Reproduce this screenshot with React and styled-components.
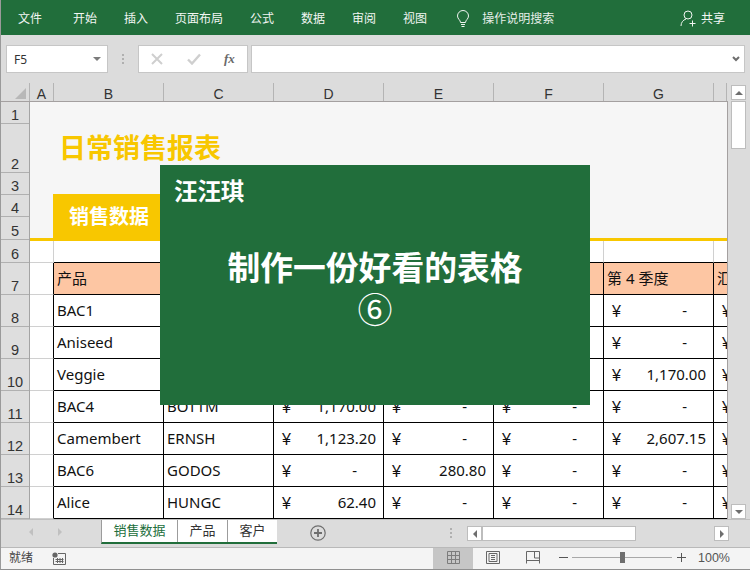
import React from "react";
import styled, { createGlobalStyle } from "styled-components";

const CJK = `"Noto Sans", "Noto Sans CJK SC", sans-serif`;
const GREEN = "#216e3b";
const YELLOW = "#f8c700";
const CHROME = "#dcdcdc";

const Global = createGlobalStyle`
  html, body { margin: 0; padding: 0; width: 750px; height: 570px; overflow: hidden; background: ${CHROME}; }
  * { box-sizing: border-box; }
  body { font-family: ${CJK}; }
`;

const Window = styled.div`
  position: relative;
  width: 750px; height: 570px;
  display: flex; flex-direction: column;
  border-left: 1px solid #9a9a9a;
  border-bottom: 1px solid #8f8f8f;
  background: ${CHROME};
  overflow: hidden;
`;

/* Ribbon */
const Ribbon = styled.header`
  height: 35px; flex: none;
  background: ${GREEN};
  display: flex; align-items: center; gap: 27px;
  padding: 2px 25px 0 17px;
  color: #f2f6f3; font-size: 12px;
`;
const RibbonItem = styled.span`
  margin-right: ${p => p.$after || 0}px;
  line-height: 16px;
`;
const Search = styled.div`
  display: flex; align-items: center; gap: 12px; margin-left: 2px; color: #e6efe9;
`;
const Share = styled.div`
  margin-left: auto; display: flex; align-items: center; gap: 4px;
`;

/* Formula bar */
const FormulaBar = styled.div`
  height: 48px; flex: none;
  display: flex; align-items: flex-start;
  padding: 10px 5px 0 5px;
`;
const Box = styled.div`
  height: 28px; background: #fff; border: 1px solid #c6c6c6;
  display: flex; align-items: center;
`;
const NameBox = styled(Box)`
  width: 102px; padding: 0 6px 0 7px; justify-content: space-between;
  font-size: 12px; color: #333;
`;
const Caret = styled.i`
  width: 0; height: 0;
  border-left: 4px solid transparent; border-right: 4px solid transparent;
  border-top: 4px solid #7b7b7b;
`;
const Dots = styled.div`
  width: 2px; height: 10px; margin: 9px 14px 0 14px;
  background: repeating-linear-gradient(#b0b0b0 0 2px, transparent 2px 4px);
`;
const FxBox = styled(Box)`
  width: 110px; margin-right: 3px; padding-left: 12px; gap: 24px;
`;
const FxLabel = styled.span`
  font: italic bold 13px "Liberation Serif", serif; color: #6a6a6a; margin-left: -1px;
`;
const Formula = styled(Box)`
  flex: 1; justify-content: flex-end; padding-right: 4px;
`;

/* Grid region */
const Workspace = styled.div`
  flex: none; height: 436px; display: flex;
`;
const GridColumn = styled.div`
  width: 727px; display: flex; flex-direction: column;
`;
const ColHeaders = styled.div`
  height: 19px; flex: none; display: flex; border-bottom: 1px solid #a4a0a0;
`;
const Corner = styled.div`
  width: 29px; height: 18px; display: flex; justify-content: flex-end; align-items: flex-end;
  padding: 0 3px 2px 0; border-right: 1px solid #b4b4b4;
`;
const ColHead = styled.div`
  width: ${p => p.$w}px; height: 18px;
  display: flex; align-items: center; justify-content: center;
  font: 14px "Liberation Sans", sans-serif; color: #333;
  padding-top: 3px;
  border-right: 1px solid #b4b4b4;
`;
const Body = styled.div`
  flex: 1; display: flex; min-height: 0;
`;
const RowHeads = styled.div`
  width: 29px; display: flex; flex-direction: column; border-right: 1px solid #a4a4a4; background: #dedede;
`;
const RowHead = styled.div`
  height: ${p => p.$h}px; flex: none;
  display: flex; align-items: flex-end; justify-content: center;
  font: 14.5px/15px "Liberation Sans", sans-serif; color: #333;
  border-bottom: 1px solid #b0b0b0;
`;
const Sheet = styled.main`
  width: 698px; background: #fff; border-right: 1px solid #a4a0a0;
  overflow: hidden; display: flex; flex-direction: column;
`;
const Banner = styled.section`
  height: 139px; flex: none; background: #f6f6f6;
  border-bottom: 3px solid ${YELLOW};
  display: flex; flex-direction: column; justify-content: flex-end;
`;
const Title = styled.h1`
  margin: 0 0 28px 29px; font-size: 27px; line-height: 38px; font-weight: 700;
  color: ${YELLOW}; font-family: "Noto Sans CJK SC", sans-serif;
`;
const SheetTag = styled.div`
  margin-left: 23px; width: 110px; height: 44px;
  background: ${YELLOW}; color: #fff;
  display: flex; align-items: center; padding: 0 0 2px 16px;
  font-family: "Noto Sans CJK SC", sans-serif; font-size: 20px; font-weight: 700;
`;
const Row = styled.div`
  display: grid; flex: none;
  grid-template-columns: 24px repeat(6, 110px) 14px;
  height: ${p => p.$h}px;
`;
const Gutter = styled.div`
  border-right: 1px solid ${p => (p.$dark ? "#000" : "#d0d0d0")};
  border-bottom: 1px solid #d0d0d0;
`;
const BlankCell = styled.div`
  border-right: 1px solid #d0d0d0;
  border-bottom: 1px solid #000;
`;
const Cell = styled.div`
  display: flex; align-items: center; justify-content: space-between;
  padding: 0 ${p => (p.$dash ? 26 : 7)}px 2px ${p => (p.$money ? 8 : 3)}px;
  font-size: 15px; color: #111; white-space: nowrap; overflow: hidden;
  background: ${p => (p.$head ? "#fdc6a3" : "#fff")};
  border-right: 1px solid #000;
  border-bottom: 1px solid #000;
`;
const Yen = styled.span`
  font: 16px/20px "Liberation Sans", sans-serif;
  margin-top: 4px;
`;

/* Vertical scrollbar */
const VScroll = styled.aside`
  width: 22px; padding: 2px 3px 0 3px; display: flex; flex-direction: column;
`;
const ScrollButton = styled.div`
  width: 15px; height: 15px; flex: none; background: #fff; border: 1px solid #bdbdbd;
  display: flex; align-items: center; justify-content: center;
`;
const Arrow = styled.i`
  width: 0; height: 0;
  border-left: 4px solid transparent; border-right: 4px solid transparent;
  ${p => (p.$up ? "border-bottom: 4px solid #6e6e6e;" : "border-top: 4px solid #6e6e6e;")}
`;
const SideArrow = styled.i`
  width: 0; height: 0;
  border-top: 4px solid transparent; border-bottom: 4px solid transparent;
  ${p => (p.$left
    ? `border-right: 4px solid ${p.$c || "#6e6e6e"};`
    : `border-left: 4px solid ${p.$c || "#6e6e6e"};`)}
`;
const VThumb = styled.div`
  width: 15px; height: 48px; margin-top: 1px; background: #fff; border: 1px solid #bdbdbd;
`;
const VSpacer = styled.div`flex: 1;`;

/* Sheet tabs */
const TabBar = styled.nav`
  height: 28px; flex: none; display: flex; align-items: flex-start;
  border-top: 1px solid #c0c0c0;
`;
const TabNav = styled.div`
  width: 100px; height: 24px; display: flex; align-items: center; gap: 25px; padding-left: 28px;
`;
const Tabs = styled.div`
  display: flex; height: 24px; border-bottom: 2px solid ${GREEN}; border-left: 1px solid #9c9c9c;
  background: #fff;
`;
const Tab = styled.div`
  width: ${p => p.$w}px; display: flex; align-items: center; justify-content: center;
  font-size: 13px; color: ${p => (p.$on ? GREEN : "#333")};
  border-right: ${p => (p.$last ? "0" : "1px solid #9c9c9c")};
  padding-bottom: 3px;
`;
const AddSlot = styled.div`
  margin: 5px 0 0 33px; display: flex;
`;
const TabDots = styled.div`
  width: 2px; height: 10px; margin: 8px 0 0 124px;
  background: repeating-linear-gradient(#b0b0b0 0 2px, transparent 2px 4px);
`;
const HScroll = styled.div`
  margin: 6px 0 0 15px; display: flex; width: 262px; height: 15px; flex: none;
`;
const HButton = styled(ScrollButton)`
  margin-left: ${p => p.$gap || 0}px;
`;
const HThumb = styled.div`
  width: 154px; height: 15px; background: #fff; border: 1px solid #bdbdbd; margin-left: 0;
`;

/* Status bar */
const Status = styled.footer`
  flex: 1; display: flex; align-items: center; background: #f4f4f4;
  border-top: 1px solid #b9b9b9; font-size: 12px; color: #444;
  padding-left: 8px;
`;
const StatusText = styled.span`margin: 0 19px 3px 0;`;
const ViewButton = styled.div`
  width: 40px; height: 21px; margin-left: ${p => p.$gap || 0}px; padding-bottom: 2px;
  display: flex; align-items: center; justify-content: center;
  background: ${p => (p.$on ? "#c6c6c6" : "transparent")};
`;
const Zoom = styled.div`
  display: flex; align-items: center; margin: 0 0 2px 6px; color: #555;
`;
const ZoomSign = styled.span`
  width: 9px; height: 1px; background: #555; position: relative; display: block;
  ${p => p.$plus && `&::after { content: ""; position: absolute; left: 4px; top: -4px; width: 1px; height: 9px; background: #555; }`}
`;
const Track = styled.div`
  width: 100px; height: 1px; margin: 0 5px 0 4px; background: #a8a8a8;
  display: flex; align-items: center; padding-left: 48px;
`;
const Knob = styled.i`
  width: 5px; height: 11px; background: #6e6e6e; flex: none;
`;
const Percent = styled.span`
  margin-left: 12px; font: 12.5px "Liberation Sans", sans-serif; color: #555;
`;

/* Overlay slide */
const Card = styled.section`
  position: absolute; left: 159px; top: 165px; width: 430px; height: 240px;
  background: ${GREEN}; color: #fff;
  display: flex; flex-direction: column;
  font-family: "Noto Sans CJK SC", sans-serif;
`;
const Brand = styled.div`
  margin: 11px 0 0 14px; font-size: 23.4px; line-height: 28px; font-weight: 700;
`;
const Headline = styled.h2`
  margin: 40px 0 0; text-align: center; font-size: 32.8px; line-height: 44px; font-weight: 700;
  white-space: nowrap;
`;
const Badge = styled.div`
  margin: 2px auto 0; width: 36px; height: 36px; text-align: center;
  font: 400 35px/36px "Noto Sans CJK SC", sans-serif;
`;

const Svg = styled.svg`display: block; flex: none;`;

const Bulb = () => (
  <Svg width="14" height="18" viewBox="0 0 14 18" fill="none" stroke="#f0f5f1" strokeWidth="1">
    <path d="M4.5 12.5C4.5 10 1.5 9 1.5 6a5.5 5.5 0 0 1 11 0c0 3-3 4-3 6.5z" />
    <path d="M5 14.5h4M5.5 16.5h3" />
  </Svg>
);
const Person = () => (
  <Svg width="17" height="17" viewBox="0 0 17 17" fill="none" stroke="#f0f5f1" strokeWidth="1">
    <circle cx="8" cy="5" r="4" />
    <path d="M1 16c0-3.5 2-6 5-7M12.5 10.5v6M9.5 13.5h6" />
  </Svg>
);
const Cross = () => (
  <Svg width="12" height="12" viewBox="0 0 12 12" fill="none" stroke="#cfcfcf" strokeWidth="2">
    <path d="M1 1l10 10M11 1L1 11" />
  </Svg>
);
const Check = () => (
  <Svg width="14" height="12" viewBox="0 0 14 12" fill="none" stroke="#cfcfcf" strokeWidth="2.4">
    <path d="M1 6.5l4 4 8-9" />
  </Svg>
);
const Chevron = () => (
  <Svg width="8" height="6" viewBox="0 0 8 6" fill="none" stroke="#6e6e6e" strokeWidth="2">
    <path d="M1 1l3 3 3-3" />
  </Svg>
);
const CornerMark = () => (
  <Svg width="11" height="11" viewBox="0 0 11 11"><path d="M11 0v11H0z" fill="#b8b8b8" /></Svg>
);
const AddSheet = () => (
  <Svg width="16" height="16" viewBox="0 0 16 16" fill="none" stroke="#6e6e6e">
    <circle cx="8" cy="8" r="7.2" strokeWidth="1.2" />
    <path d="M8 4v8M4 8h8" strokeWidth="1.8" />
  </Svg>
);
const MacroIcon = () => (
  <Svg width="14" height="13" viewBox="0 0 14 13" fill="none" stroke="#666">
    <circle cx="3" cy="3" r="2.6" fill="#666" stroke="none" />
    <path d="M6 1.5h7.5v11H1.5V6M3.5 7.5h8M3.5 9.5h8M5.5 6v5M8 6v5M10.5 6v5" />
  </Svg>
);
const GridView = () => (
  <Svg width="13" height="13" viewBox="0 0 13 13" fill="none" stroke="#7c7c7c">
    <path d="M.5.5h12v12H.5zM4.5.5v12M8.5.5v12M.5 4.5h12M.5 8.5h12" />
  </Svg>
);
const PageView = () => (
  <Svg width="14" height="13" viewBox="0 0 14 13" fill="none" stroke="#666">
    <path d="M.5.5h13v12H.5zM3 2.5h8v8H3zM5 4.5h4M5 6.5h4M5 8.5h4" />
  </Svg>
);
const BreakView = () => (
  <Svg width="14" height="13" viewBox="0 0 14 13" fill="none" stroke="#666">
    <path d="M.5 12.5V.5h13v12M.5 9.5h13M8.5.5v6.5h5" />
  </Svg>
);

const COLS = [["A", 24], ["B", 110], ["C", 110], ["D", 110], ["E", 110], ["F", 110], ["G", 110], ["", 13]];
const ROWS = [[1, 22], [2, 49], [3, 22], [4, 22], [5, 23], [6, 23], [7, 32], [8, 32], [9, 32], [10, 32], [11, 32], [12, 32], [13, 32], [14, 32]];
const NAV = ["开始", "插入", "页面布局", "公式", "数据", "审阅", "视图"];
const DATA = [
  ["BAC1", "ALFKI", "-", "-", "-", "-"],
  ["Aniseed", "BERGS", "-", "-", "-", "-"],
  ["Veggie", "BOLID", "-", "-", "-", "1,170.00"],
  ["BAC4", "BOTTM", "1,170.00", "-", "-", "-"],
  ["Camembert", "ERNSH", "1,123.20", "-", "-", "2,607.15"],
  ["BAC6", "GODOS", "-", "280.80", "-", "-"],
  ["Alice", "HUNGC", "62.40", "-", "-", "-"],
];

const Money = ({ value }) => (
  <Cell $money $dash={value === "-"}>
    <Yen>¥</Yen>
    <span>{value}</span>
  </Cell>
);

export default function App() {
  return (
    <Window>
      <Global />
      <Ribbon>
        <RibbonItem $after={4}>文件</RibbonItem>
        {NAV.map(n => <RibbonItem key={n}>{n}</RibbonItem>)}
        <Search>
          <Bulb />
          <RibbonItem>操作说明搜索</RibbonItem>
        </Search>
        <Share>
          <Person />
          <RibbonItem>共享</RibbonItem>
        </Share>
      </Ribbon>

      <FormulaBar>
        <NameBox>F5<Caret /></NameBox>
        <Dots />
        <FxBox><Cross /><Check /><FxLabel>fx</FxLabel></FxBox>
        <Formula><Chevron /></Formula>
      </FormulaBar>

      <Workspace>
        <GridColumn>
          <ColHeaders>
            <Corner><CornerMark /></Corner>
            {COLS.map(([c, w]) => <ColHead key={c} $w={w}>{c}</ColHead>)}
          </ColHeaders>
          <Body>
            <RowHeads>
              {ROWS.map(([n, h]) => <RowHead key={n} $h={h}>{n}</RowHead>)}
            </RowHeads>
            <Sheet>
              <Banner>
                <Title>日常销售报表</Title>
                <SheetTag>销售数据</SheetTag>
              </Banner>
              <Row $h={22}>
                <Gutter />
                {[0, 1, 2, 3, 4, 5, 6].map(i => <BlankCell key={i} />)}
              </Row>
              <Row $h={32}>
                <Gutter $dark />
                {["产品", "客户", "第 1 季度", "第 2 季度", "第 3 季度", "第 4 季度", "汇总"].map(h => (
                  <Cell key={h} $head>{h}</Cell>
                ))}
              </Row>
              {DATA.map(r => (
                <Row key={r[0]} $h={32}>
                  <Gutter $dark />
                  <Cell>{r[0]}</Cell>
                  <Cell>{r[1]}</Cell>
                  {r.slice(2).map((v, i) => <Money key={i} value={v} />)}
                  <Money value="-" />
                </Row>
              ))}
            </Sheet>
          </Body>
        </GridColumn>
        <VScroll>
          <ScrollButton><Arrow $up /></ScrollButton>
          <VThumb />
          <VSpacer />
          <ScrollButton><Arrow /></ScrollButton>
        </VScroll>
      </Workspace>

      <TabBar>
        <TabNav>
          <SideArrow $left $c="#c0c0c0" />
          <SideArrow $c="#c0c0c0" />
        </TabNav>
        <Tabs>
          <Tab $w={76} $on>销售数据</Tab>
          <Tab $w={50}>产品</Tab>
          <Tab $w={49} $last>客户</Tab>
        </Tabs>
        <AddSlot><AddSheet /></AddSlot>
        <TabDots />
        <HScroll>
          <HButton><SideArrow $left /></HButton>
          <HThumb />
          <HButton $gap={78}><SideArrow /></HButton>
        </HScroll>
      </TabBar>

      <Status>
        <StatusText>就绪</StatusText>
        <MacroIcon />
        <ViewButton $on $gap={367}><GridView /></ViewButton>
        <ViewButton><PageView /></ViewButton>
        <ViewButton><BreakView /></ViewButton>
        <Zoom>
          <ZoomSign />
          <Track><Knob /></Track>
          <ZoomSign $plus />
          <Percent>100%</Percent>
        </Zoom>
      </Status>

      <Card>
        <Brand>汪汪琪</Brand>
        <Headline>制作一份好看的表格</Headline>
        <Badge>⑥</Badge>
      </Card>
    </Window>
  );
}
